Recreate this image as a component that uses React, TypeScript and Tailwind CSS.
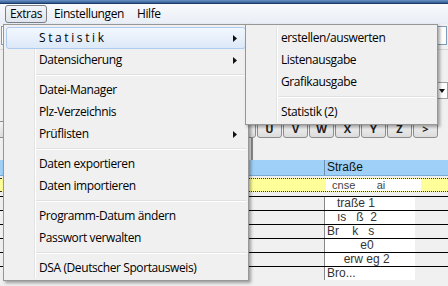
import React from "react"

const font = { fontFamily: '"Open Sans", "Noto Sans", Arial, sans-serif' }

type Item = { label: string; arrow?: boolean; active?: boolean; spaced?: boolean } | "sep"

const mainItems: Item[] = [
  { label: "Statistik", arrow: true, active: true, spaced: true },
  { label: "Datensicherung", arrow: true },
  "sep",
  { label: "Datei-Manager" },
  { label: "Plz-Verzeichnis" },
  { label: "Prüflisten", arrow: true },
  "sep",
  { label: "Daten exportieren" },
  { label: "Daten importieren" },
  "sep",
  { label: "Programm-Datum ändern" },
  { label: "Passwort verwalten" },
  "sep",
  { label: "DSA (Deutscher Sportausweis)" },
]

const subItems: Item[] = [
  { label: "erstellen/auswerten" },
  { label: "Listenausgabe" },
  { label: "Grafikausgabe" },
  "sep",
  { label: "Statistik (2)" },
]

// buttons left of "U" are hidden behind the menu, so they carry no label
const letters = ["", "", "", "", "", "", "", "", "", "", "U", "V", "W", "X", "Y", "Z", ">"]

const rows = ["   traße 1", "   ıs   ß  2", "Br    k   s", "          e0", "     erw eg 2", "Bro..."]

function Arrow() {
  return (
    <svg width="4" height="7" viewBox="0 0 4 7" className="shrink-0">
      <path d="M0 0 L4 3.5 L0 7 Z" fill="#111" />
    </svg>
  )
}

function Menu({ items, gutter }: { items: Item[]; gutter: number }) {
  return (
    <div className="relative flex flex-col bg-[#f0f0f0] border border-[#979797] pt-[2px] pb-[1px] px-[2px] shadow-[2px_2px_3px_rgba(0,0,0,0.35)]">
      <div className="absolute top-[2px] bottom-[2px] w-px bg-[#e2e3e3]" style={{ left: gutter }} />
      <div className="absolute top-[2px] bottom-[2px] w-px bg-white" style={{ left: gutter + 1 }} />
      {items.map((it, i) =>
        it === "sep" ? (
          <div key={i} className="h-[8px] flex flex-col justify-center" style={{ paddingLeft: gutter - 2 }}>
            <div className="h-px bg-[#e0e0e0]" />
            <div className="h-px bg-white" />
          </div>
        ) : (
          <div
            key={i}
            className={
              "relative h-[22px] flex items-center pr-[8px] rounded-[3px] border " +
              (it.active
                ? "border-[#aeccef] bg-gradient-to-b from-[#f2f7fe] to-[#dde9f8]"
                : "border-transparent")
            }
          >
            <span
              className={
                "flex-1 text-[12px] text-black leading-none " +
                (it.spaced ? "tracking-[2.6px]" : "tracking-[-0.4px]")
              }
              style={{ paddingLeft: gutter + 2 }}
            >
              {it.label}
            </span>
            {it.arrow && <Arrow />}
          </div>
        )
      )}
    </div>
  )
}

export default function App() {
  return (
    <div className="relative w-[448px] h-[286px] overflow-hidden bg-[#f0f0f0]" style={font}>
      {/* title strip */}
      <div className="h-[4px] bg-gradient-to-b from-[#6b93c6] to-[#2f5a91] border-b border-[#1d3b66]" />

      {/* menu bar */}
      <div className="h-[20px] flex items-center pl-[5px] bg-gradient-to-b from-[#f7f9fc] to-[#e9eef6] text-[12px] tracking-[-0.4px] text-black">
        <div className="h-[18px] w-[42px] flex items-center px-[4px] border border-[#7b7f86] rounded-[3px] bg-gradient-to-b from-[#f2f5f9] to-[#dfe5ee]">
          Extras
        </div>
        <div className="ml-[7px]">Einstellungen</div>
        <div className="ml-[13px]">Hilfe</div>
      </div>

      {/* window content below the menus */}
      <div className="flex flex-col">
        <div className="h-[97px] relative">
          <div className="mt-[2px] mx-[1px] h-[19px] border border-[#7f9db9] bg-white" />
          <div className="h-px bg-[#d8d8d8] mt-[4px]" />
          <div className="flex justify-end mt-[32px]">
            <div className="w-[120px] h-[17px] border border-[#a0a0a0] bg-white flex items-center justify-end pr-[2px]">
              <svg width="6" height="4" viewBox="0 0 6 4">
                <path d="M0 0 H6 L3 4 Z" fill="#111" />
              </svg>
            </div>
          </div>
        </div>

        {/* letter buttons */}
        <div className="h-[17px] flex gap-[1px] ml-[-3px]">
          {letters.map((l, i) => (
            <div
              key={i}
              className="w-[25px] h-[17px] shrink-0 flex items-center justify-center border border-[#8d8d8d] rounded-[3px] bg-gradient-to-b from-[#f6f6f6] to-[#dcdcdc] text-[11px] font-bold text-[#222]"
            >
              {l}
            </div>
          ))}
        </div>

        <div className="h-[22px] flex">
          <div className="w-[251px]" />
          <div className="w-[2px] bg-[#8c8c8c]" />
        </div>

        {/* grid */}
        <div className="flex flex-col text-[12px] text-[#111]" style={{ fontFamily: '"Liberation Sans", Arial, sans-serif' }}>
          <div className="h-[16px] flex bg-[#9fd0f7] border-b border-[#7aa9d3]">
            <div className="w-[50px] border-r border-[#6e8fb0]" />
            <div className="w-[80px] border-r border-[#6e8fb0]" />
            <div className="w-[53px] border-r border-[#6e8fb0]" />
            <div className="w-[142px] border-r border-[#6e8fb0]" />
            <div className="flex-1 pl-[2px] leading-[15px]">Straße</div>
          </div>
          <div className="h-[20px] flex flex-col pt-[2px]">
            <div className="h-[14px] flex bg-[#ffff99] border-y border-dotted border-[#333]">
              <div className="w-[326px]" />
              <div className="w-[95px] bg-white leading-[12px] text-[11px] whitespace-pre text-[#444]">  cnse       ai</div>
            </div>
          </div>
          {rows.map((r, i) => (
            <div key={i} className="h-[14px] flex border-t border-black">
              <div className="w-[50px] border-r border-black" />
              <div className="w-[80px] border-r border-black" />
              <div className="w-[53px] border-r border-black" />
              <div className="w-[142px] border-r border-[#888]" />
              <div className="w-[90px] bg-white pl-[2px] leading-[13px] whitespace-pre text-[#333]">{r}</div>
              <div className="flex-1" />
            </div>
          ))}
        </div>
      </div>

      {/* Extras menu */}
      <div className="absolute left-[3px] top-[24px] w-[246px]">
        <Menu items={mainItems} gutter={30} />
      </div>

      {/* Statistik submenu */}
      <div className="absolute left-[245px] top-[24px] w-[193px]">
        <Menu items={subItems} gutter={30} />
      </div>
    </div>
  )
}
